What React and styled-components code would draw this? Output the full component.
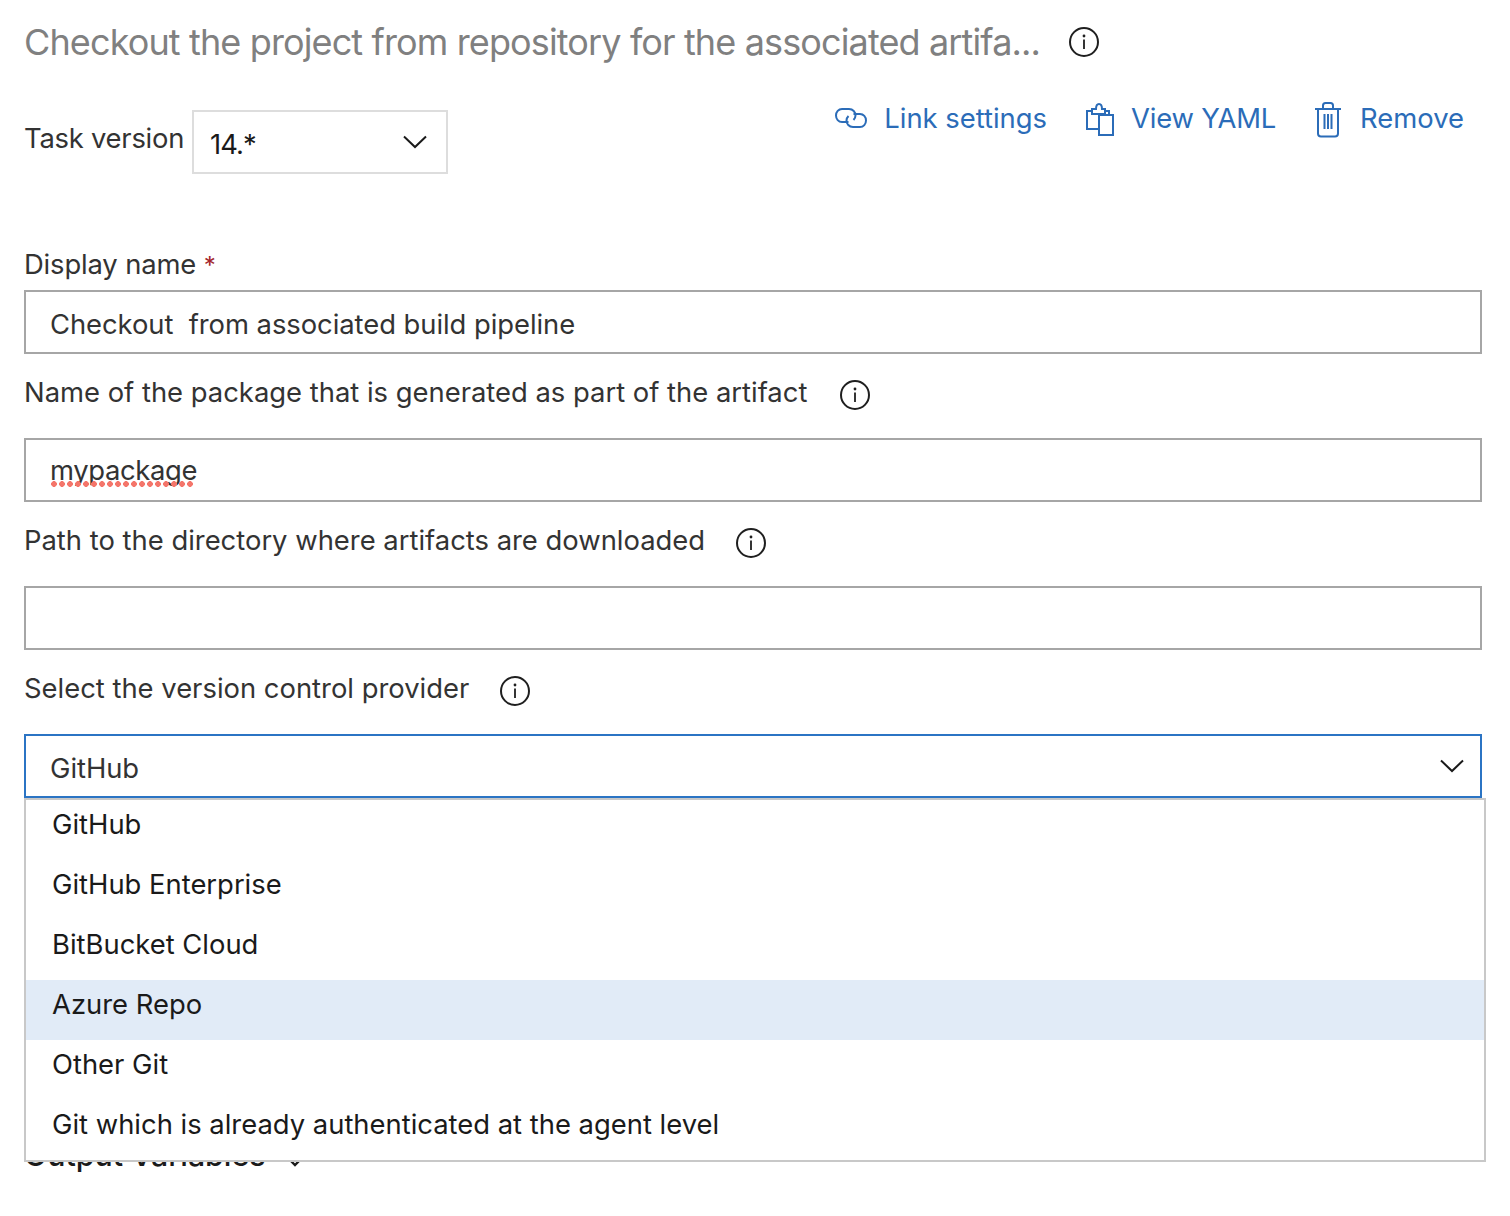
import React from 'react'
import styled, { createGlobalStyle } from 'styled-components'

const providers = ['GitHub', 'GitHub Enterprise', 'BitBucket Cloud', 'Azure Repo', 'Other Git', 'Git which is already authenticated at the agent level']

//Icons
const InfoIcon = ({ low }) => (
	<InfoSvg low={low} viewBox="0 0 30 30" fill="none" stroke="#1f1f1f">
		<circle cx="15" cy="15" r="14" strokeWidth="2" />
		<circle cx="15" cy="9" r="1.4" fill="#1f1f1f" stroke="none" />
		<path d="M15 12.5V22" strokeWidth="1.8" />
	</InfoSvg>
)

const Chevron = () => (
	<ChevronSvg viewBox="0 0 24 14" fill="none" stroke="#1a1a1a" strokeWidth="2">
		<path d="M1 1.5L12 12L23 1.5" />
	</ChevronSvg>
)

const LinkIcon = () => (
	<ActionSvg width="32" height="20" viewBox="0 0 32 20">
		<path d="M13.5 14H7C3.5 14 1 11 1 7.5S3.5 1 7 1H14C18 1 20.5 4 20.5 7.5C20.5 9.5 19.5 11 18.5 12" />
		<path d="M18.5 6H25C28.5 6 31 9 31 12.5S28.5 19 25 19H18C14 19 11.5 16 11.5 12.5C11.5 10.5 12.5 9 13.5 8" />
	</ActionSvg>
)

const ClipboardIcon = () => (
	<ActionSvg nudge width="28" height="33" viewBox="0 0 28 33">
		<path d="M12 26H1V8H6M19 8H23V11" />
		<path d="M6 11V6H10C10 3 11 1 13 1S16 3 16 6H19V11Z" />
		<rect x="13" y="12" width="14" height="20" />
	</ActionSvg>
)

const TrashIcon = () => (
	<ActionSvg nudge width="26" height="36" viewBox="0 0 26 36">
		<path d="M0 7H26" />
		<path d="M8 7V3.5C8 2 9 1 10.500 1H15.500C17 1 18 2 18 3.500V7" />
		<path d="M3 7V31.500C3 33.500 4 34.500 6 34.500H20C22 34.500 23 33.500 23 31.500V7" />
		<path d="M9.500 12V27M13 12V27M16.500 12V27" />
	</ActionSvg>
)

export default function App() {
	return (
		<Page>
			<GlobalStyle />
			<TitleRow>
				<Title>Checkout the project from repository for the associated artifa...</Title>
				<InfoIcon />
			</TitleRow>
			<TaskRow>
				<TaskVersion>
					<TaskLabel>Task version</TaskLabel>
					<VersionSelect>
						<VersionValue>14.*</VersionValue>
						<Chevron />
					</VersionSelect>
				</TaskVersion>
				<Actions>
					<Action spacing={17}>
						<LinkIcon />
						Link settings
					</Action>
					<Action spacing={17} tight>
						<ClipboardIcon />
						View YAML
					</Action>
					<Action spacing={19}>
						<TrashIcon />
						Remove
					</Action>
				</Actions>
			</TaskRow>
			<DisplayLabel>
				Display name <Required>*</Required>
			</DisplayLabel>
			<Input>Checkout&nbsp; from associated build pipeline</Input>
			<FieldLabel spacing={33}>
				Name of the package that is generated as part of the artifact
				<InfoIcon low />
			</FieldLabel>
			<Input>
				<Misspelled>mypackage</Misspelled>
			</Input>
			<FieldLabel spacing={31}>
				Path to the directory where artifacts are downloaded
				<InfoIcon low />
			</FieldLabel>
			<Input />
			<FieldLabel spacing={31}>
				Select the version control provider
				<InfoIcon low />
			</FieldLabel>
			<SelectWrap>
				<Input focused>
					GitHub
					<Chevron />
				</Input>
				<Menu>
					{providers.map((name) => (
						<MenuItem key={name} active={name === 'Azure Repo'}>
							{name}
						</MenuItem>
					))}
				</Menu>
			</SelectWrap>
			<OutputRow>
				Output Variables
				<OutputChevron viewBox="0 0 16 10" fill="none" stroke="#1a1a1a" strokeWidth="2.4">
					<path d="M1 1L8 8L15 1" />
				</OutputChevron>
			</OutputRow>
		</Page>
	)
}

//Style
const GlobalStyle = createGlobalStyle`
	body {
		margin: 0;
		background: #fff;
		font-family: Inter, "Liberation Sans", sans-serif;
		font-size: 27.4px;
		color: #333;
	}
`

const Page = styled.div`
	box-sizing: border-box;
	width: 1510px;
	height: 1216px;
	padding: 20px 28px 0 24px;
	overflow: hidden;
`

const TitleRow = styled.div`
	display: flex;
	align-items: center;
	gap: 29px;
	height: 44px;
`

const Title = styled.div`
	font-size: 36px;
	font-weight: 400;
	letter-spacing: -0.87px;
	color: #808080;
	white-space: nowrap;
`

const InfoSvg = styled.svg`
	flex: none;
	width: 30px;
	height: 30px;
	margin-top: ${(props) => (props.low ? '5px' : '0')};
`

const ChevronSvg = styled.svg`
	flex: none;
	width: 24px;
	height: 14px;
	margin-top: -4px;
`

const ActionSvg = styled.svg`
	flex: none;
	fill: none;
	stroke: #2b6cb8;
	stroke-width: 2;
	margin-top: ${(props) => (props.nudge ? '3px' : '0')};
`

const TaskRow = styled.div`
	display: flex;
	justify-content: space-between;
	align-items: flex-start;
	margin-top: 46px;
	padding-right: 18px;
`

const TaskVersion = styled.div`
	display: flex;
	align-items: flex-start;
	gap: 8px;
`

const TaskLabel = styled.div`
	line-height: 56px;
	letter-spacing: -0.25px;
`

const VersionSelect = styled.div`
	box-sizing: border-box;
	display: flex;
	align-items: center;
	justify-content: space-between;
	width: 256px;
	height: 64px;
	padding: 0 19px 0 16px;
	border: 2px solid #ddd;
	${ChevronSvg} {
		margin-top: 0;
	}
`

const VersionValue = styled.span`
	color: #1a1a1a;
	padding-top: 4px;
	letter-spacing: -1px;
`

const Actions = styled.div`
	display: flex;
	gap: 39px;
`

const Action = styled.div`
	display: flex;
	align-items: center;
	gap: ${(props) => props.spacing}px;
	height: 16px;
	color: #2b6cb8;
	letter-spacing: ${(props) => (props.tight ? '-0.2px' : '0')};
`

const DisplayLabel = styled.div`
	margin-top: 72px;
	line-height: 36px;
	height: 44px;
	letter-spacing: -0.15px;
`

const Required = styled.span`
	color: #a4262c;
	font-size: 24px;
`

const FieldLabel = styled.div`
	box-sizing: border-box;
	display: flex;
	align-items: center;
	gap: ${(props) => props.spacing}px;
	height: 84px;
	padding-bottom: 8px;
`

const Input = styled.div`
	box-sizing: border-box;
	display: flex;
	align-items: center;
	justify-content: space-between;
	height: 64px;
	padding: 3px 16px 0 24px;
	border: 2px solid ${(props) => (props.focused ? '#2b74c4' : '#a6a6a6')};
	white-space: pre;
	letter-spacing: -0.05px;
`

const Misspelled = styled.span`
	position: relative;
	margin-top: -3px;
	letter-spacing: -0.35px;
	&::after {
		content: '';
		position: absolute;
		left: 0;
		right: 3px;
		bottom: 0;
		height: 6px;
		background: radial-gradient(circle, #f4756a 2.6px, transparent 3.1px) 0 0 / 8px 6px repeat-x;
	}
`

const SelectWrap = styled.div`
	position: relative;
`

const Menu = styled.div`
	position: absolute;
	top: 64px;
	left: 0;
	right: -4px;
	box-sizing: border-box;
	height: 364px;
	background: #fff;
	border: 2px solid #c8c8c8;
	z-index: 1;
`

const MenuItem = styled.div`
	height: 60px;
	line-height: 48px;
	padding-left: 26px;
	color: #1a1a1a;
	background: ${(props) => (props.active ? '#e1ebf7' : 'transparent')};
`

const OutputRow = styled.div`
	display: flex;
	align-items: center;
	gap: 21px;
	margin-top: 339px;
	font-size: 30.3px;
	font-weight: 500;
	color: #1a1a1a;
`

const OutputChevron = styled.svg`
	flex: none;
	width: 16px;
	height: 10px;
	margin-top: 14px;
`
